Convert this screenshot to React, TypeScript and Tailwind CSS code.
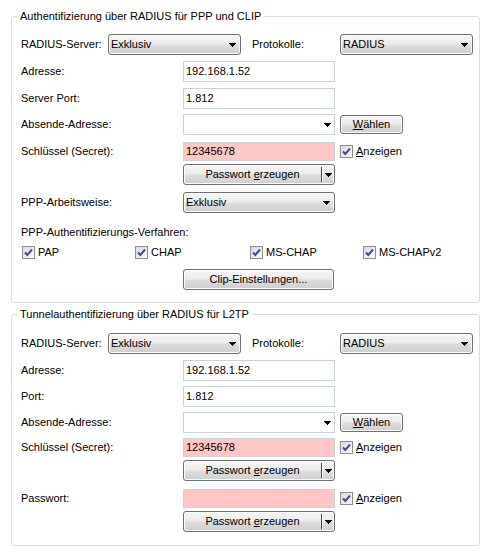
import React from "react";

// Windows-ish RADIUS settings dialog

const btnBg =
  "bg-[linear-gradient(#f6f6f6,#ececec_45%,#dcdcdc_55%,#cfcfcf)] shadow-[inset_0_0_0_1px_#fbfbfb]";

function Arrow() {
  return (
    <svg width="7" height="4" viewBox="0 0 7 4" shapeRendering="crispEdges" className="shrink-0">
      <path d="M0 0h7v1h-1v1h-1v1h-1v1h-1v-1h-1v-1h-1v-1h-1z" fill="#000" />
    </svg>
  );
}

function Select({ value, className = "" }: { value: string; className?: string }) {
  return (
    <div
      className={`flex items-center h-[21px] border border-[#707070] rounded-[3px] pl-[2px] pr-[4px] ${btnBg} ${className}`}
    >
      <span className="flex-1 leading-none">{value}</span>
      <Arrow />
    </div>
  );
}

function Input({ value = "", pink = false, h = "h-[21px]" }: { value?: string; pink?: boolean; h?: string }) {
  return (
    <div
      className={`flex items-center w-[152px] ${h} border border-[#c8d3dc] pl-[2px] ${
        pink ? "bg-[#ffc6c6]" : "bg-white"
      }`}
    >
      {value}
    </div>
  );
}

function Combo() {
  return (
    <div className="flex items-center justify-end w-[152px] h-[21px] border border-[#c8d3dc] bg-white pr-[3px]">
      <Arrow />
    </div>
  );
}

function Button({ children, className = "" }: { children: React.ReactNode; className?: string }) {
  return (
    <div
      className={`flex items-center justify-center border border-[#707070] rounded-[3px] ${btnBg} ${className}`}
    >
      {children}
    </div>
  );
}

function SplitButton() {
  return (
    <div className={`flex items-center w-[152px] h-[21px] border border-[#707070] rounded-[3px] ${btnBg}`}>
      <span className="flex-1 text-center">
        Passwort <span className="underline">e</span>rzeugen
      </span>
      <div className="w-[2px] h-[15px] border-l border-l-[#444] border-r border-r-[#fff]" />
      <div className="w-[11px] flex justify-center">
        <Arrow />
      </div>
    </div>
  );
}

function Check({ label, underline = false }: { label: string; underline?: boolean }) {
  return (
    <div className="flex items-center gap-[3px]">
      <svg width="13" height="13" viewBox="0 0 13 13" shapeRendering="crispEdges" className="shrink-0">
        <defs>
          <linearGradient id="cbg" x1="0" y1="0" x2="1" y2="1">
            <stop offset="0" stopColor="#d6d6d6" />
            <stop offset="1" stopColor="#ffffff" />
          </linearGradient>
        </defs>
        <rect x="0.5" y="0.5" width="12" height="12" fill="url(#cbg)" stroke="#8e8f8f" />
        <path
          d="M3 6.5 L5.3 9 L10 3.5"
          fill="none"
          stroke="#3b4f99"
          strokeWidth="2"
          shapeRendering="geometricPrecision"
        />
      </svg>
      {underline ? (
        <span>
          <span className="underline">{label[0]}</span>
          {label.slice(1)}
        </span>
      ) : (
        <span>{label}</span>
      )}
    </div>
  );
}

function Row({ label, children, className = "" }: { label?: string; children: React.ReactNode; className?: string }) {
  return (
    <div className={`flex items-center ${className}`}>
      <div className="w-[162px] shrink-0">{label}</div>
      {children}
    </div>
  );
}

function Group({ title, children, className = "" }: { title: string; children: React.ReactNode; className?: string }) {
  return (
    <div className={`relative ml-[11px] w-[469px] border border-[#d5dfe5] rounded-[3px] pl-[9px] ${className}`}>
      <span className="absolute -top-[7px] left-[5px] bg-white px-[3px] leading-[13px]">{title}</span>
      {children}
    </div>
  );
}

function ServerRow() {
  return (
    <div className="flex items-center">
      <div className="w-[87px]">RADIUS-Server:</div>
      <Select value="Exklusiv" className="w-[133px]" />
      <div className="w-[99px] pl-[11px]">Protokolle:</div>
      <Select value="RADIUS" className="w-[133px]" />
    </div>
  );
}

function SecretRows({ label, value }: { label: string; value: string }) {
  return (
    <>
      <Row label={label}>
        <Input value={value} pink h="h-[19px]" />
        <div className="ml-[5px]">
          <Check label="Anzeigen" underline />
        </div>
      </Row>
      <Row className="mt-[3px]">
        <SplitButton />
      </Row>
    </>
  );
}

function AbsendeRow() {
  return (
    <Row label="Absende-Adresse:">
      <Combo />
      <Button className="ml-[5px] w-[63px] h-[19px]">
        <span>
          <span className="underline">W</span>ählen
        </span>
      </Button>
    </Row>
  );
}

export default function App() {
  return (
    <div className="w-[491px] h-[553px] bg-white text-black text-[11px] font-['Liberation_Sans',Arial,sans-serif] pt-[16px]">
      <Group title="Authentifizierung über RADIUS für PPP und CLIP" className="pt-[17px] pb-[12px]">
        <ServerRow />
        <Row label="Adresse:" className="mt-[6px]">
          <Input value="192.168.1.52" />
        </Row>
        <Row label="Server Port:" className="mt-[6px]">
          <Input value="1.812" />
        </Row>
        <div className="mt-[5px]">
          <AbsendeRow />
        </div>
        <div className="mt-[7px]">
          <SecretRows label="Schlüssel (Secret):" value="12345678" />
        </div>
        <Row label="PPP-Arbeitsweise:" className="mt-[7px]">
          <Select value="Exklusiv" className="w-[152px]" />
        </Row>
        <div className="mt-[13px] h-[13px] leading-[13px]">PPP-Authentifizierungs-Verfahren:</div>
        <div className="mt-[7px] flex items-center h-[13px] pl-[1px]">
          <div className="w-[113px]">
            <Check label="PAP" />
          </div>
          <div className="w-[115px]">
            <Check label="CHAP" />
          </div>
          <div className="w-[113px]">
            <Check label="MS-CHAP" />
          </div>
          <Check label="MS-CHAPv2" />
        </div>
        <Row className="mt-[10px]">
          <Button className="w-[151px] h-[21px]">Clip-Einstellungen...</Button>
        </Row>
      </Group>

      <Group title="Tunnelauthentifizierung über RADIUS für L2TP" className="mt-[11px] pt-[18px] pb-[13px]">
        <ServerRow />
        <Row label="Adresse:" className="mt-[6px]">
          <Input value="192.168.1.52" />
        </Row>
        <Row label="Port:" className="mt-[5px]">
          <Input value="1.812" />
        </Row>
        <div className="mt-[5px]">
          <AbsendeRow />
        </div>
        <div className="mt-[5px]">
          <SecretRows label="Schlüssel (Secret):" value="12345678" />
        </div>
        <div className="mt-[8px]">
          <SecretRows label="Passwort:" value="" />
        </div>
      </Group>
    </div>
  );
}
